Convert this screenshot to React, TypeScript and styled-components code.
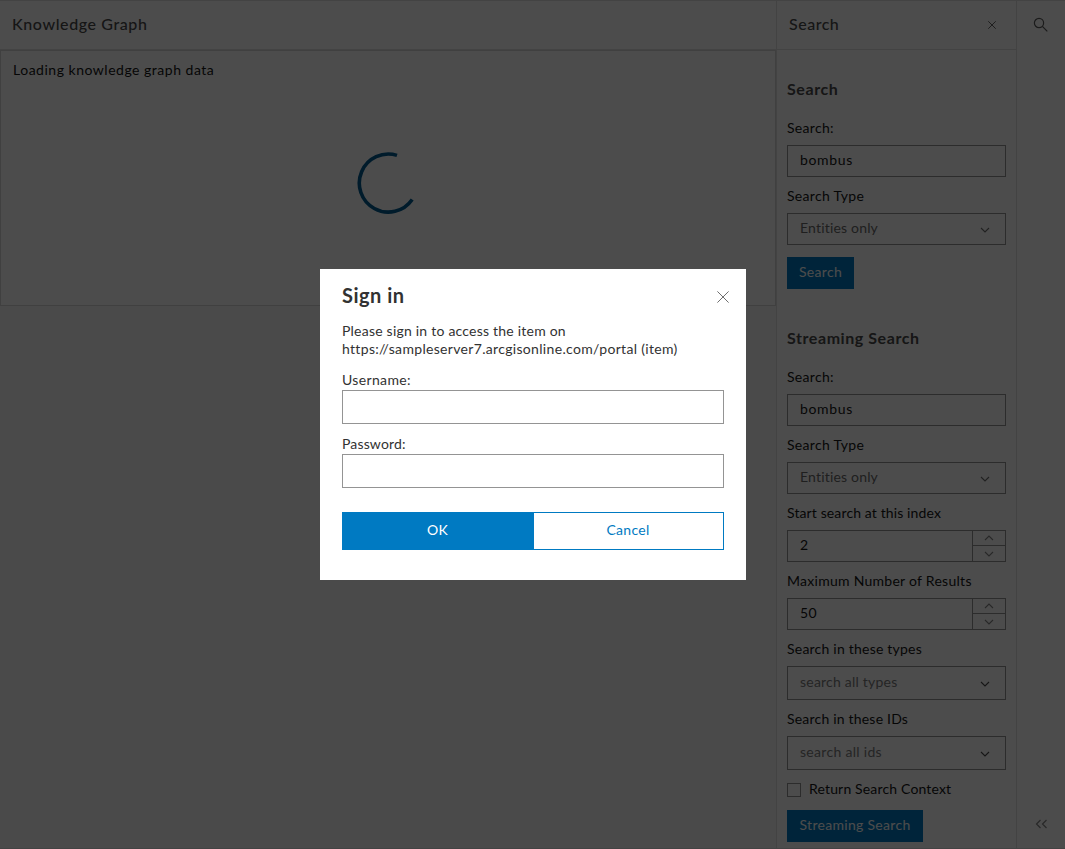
import React from "react";
import styled, { createGlobalStyle, css } from "styled-components";

const GlobalStyle = createGlobalStyle`
  *, *::before, *::after { box-sizing: border-box; }
  html, body { margin: 0; height: 100%; overflow: hidden; }
  body {
    background: #f8f8f8;
    color: #151515;
    font: 400 14px/18px Lato, "Open Sans", sans-serif;
    letter-spacing: 0.3px;
  }
  input, button { font: inherit; letter-spacing: inherit; margin: 0; border-radius: 0; outline: none; }
  svg { display: block; flex: none; }
`;

const Shell = styled.div`
  display: flex;
  width: 100%;
  height: 849px;
  border: solid #dfdfdf;
  border-width: 1px 0;
`;

const Main = styled.main`
  flex: 1;
  display: flex;
  flex-direction: column;
`;

const PanelHeader = styled.header`
  display: flex;
  align-items: center;
  justify-content: space-between;
  height: 49px;
  padding: 0 20px 0 12px;
  background: #fff;
  color: #5a5a5a;
  border-bottom: 1px solid #dfdfdf;
`;

const PanelTitle = styled.h2<{ $track: number }>`
  margin: 0;
  padding-bottom: 2px;
  font-size: 16px;
  line-height: 20px;
  font-weight: 500;
  color: #4a4a4a;
  letter-spacing: ${(p) => p.$track}px;
`;

const GraphCard = styled.section`
  display: flex;
  flex-direction: column;
  height: 256px;
  padding: 10px 12px;
  background: #fff;
  border: 1px solid #d6d6d6;
  letter-spacing: 0.51px;
`;

const LoaderArea = styled.div`
  display: flex;
  justify-content: center;
  margin-top: 72px;
`;

const SearchPanel = styled.aside`
  width: 241px;
  display: flex;
  flex-direction: column;
  background: #fff;
  border: solid #dfdfdf;
  border-width: 0 1px;
`;

const PanelBody = styled.div`
  padding: 0 10px;
`;

const ActionBar = styled.nav`
  width: 48px;
  display: flex;
  flex-direction: column;
  align-items: center;
  justify-content: space-between;
  padding: 16px 0 16px;
  background: #fff;
  color: #5a5a5a;
`;

const SectionTitle = styled.h3<{ $top: number }>`
  margin: ${(p) => p.$top}px 0 10px;
  font-size: 16px;
  line-height: 20px;
  font-weight: 700;
  color: #4a4a4a;
  letter-spacing: 0.57px;
`;

const Label = styled.label<{ $track?: number }>`
  display: block;
  height: 36px;
  padding-top: 10px;
  white-space: nowrap;
  letter-spacing: ${(p) => p.$track ?? 0.3}px;
`;

const frame = css`
  width: 100%;
  border: 1px solid #949494;
  background: #fff;
`;

const TextInput = styled.input<{ $height?: number }>`
  ${frame}
  display: block;
  height: ${(p) => p.$height ?? 32}px;
  padding: 0 12px 3px;
  color: #151515;
  letter-spacing: 0.65px;
`;

const SelectBox = styled.div<{ $height: number; $tone: string; $track?: number }>`
  ${frame}
  display: flex;
  align-items: center;
  justify-content: space-between;
  height: ${(p) => p.$height}px;
  padding: 0 15px 2px 12px;
  color: ${(p) => p.$tone};
  letter-spacing: ${(p) => p.$track ?? 0.18}px;
  svg { margin-top: 4px; }
`;

const NumberBox = styled.div`
  ${frame}
  display: flex;
  height: 32px;
`;

const NumberInput = styled.input`
  flex: 1;
  min-width: 0;
  padding: 0 12px 2px;
  border: 0;
  background: none;
  color: #151515;
`;

const Stepper = styled.div`
  width: 33px;
  display: grid;
  grid-template-rows: 14px 16px;
  border-left: 1px solid #949494;
`;

const Step = styled.button`
  display: flex;
  align-items: center;
  justify-content: center;
  padding: 0;
  border: 0;
  background: none;
  & + & { border-top: 1px solid #949494; }
`;

const PrimaryButton = styled.button<{ $width: number; $top: number }>`
  display: block;
  width: ${(p) => p.$width}px;
  height: 32px;
  margin-top: ${(p) => p.$top}px;
  padding: 0 0 2px;
  border: 0;
  background: #007ac2;
  color: #fff;
  white-space: nowrap;
`;

const CheckRow = styled.label`
  display: flex;
  align-items: center;
  gap: 8px;
  height: 18px;
  margin-top: 11px;
  letter-spacing: 0.16px;
`;

const CheckText = styled.span`
  padding-bottom: 2px;
`;

const CheckBox = styled.span`
  width: 14px;
  height: 14px;
  border: 1px solid #949494;
`;

const Backdrop = styled.div`
  position: fixed;
  inset: 0;
  display: flex;
  justify-content: center;
  align-items: flex-start;
  padding: 269px 0 0 1px;
  background: rgba(0, 0, 0, 0.7);
`;

const Dialog = styled.form`
  width: 426px;
  height: 311px;
  padding: 14px 22px 0;
  background: #fff;
  color: #323232;
`;

const DialogHead = styled.div`
  display: flex;
  justify-content: space-between;
  height: 39px;
`;

const DialogTitle = styled.h1`
  margin: 0;
  font-size: 20px;
  line-height: 24px;
  font-weight: 700;
  letter-spacing: 0.5px;
`;

const CloseButton = styled.button`
  width: 12px;
  height: 12px;
  margin: 8px -5px 0 0;
  padding: 0;
  border: 0;
  background: none;
  color: #6e6e6e;
`;

const Message = styled.p<{ $track: number }>`
  margin: 0;
  white-space: nowrap;
  letter-spacing: ${(p) => p.$track}px;
`;

const Credential = styled.label<{ $top: number; $track: number }>`
  display: block;
  margin-top: ${(p) => p.$top}px;
  letter-spacing: ${(p) => p.$track}px;
  ${TextInput} { margin-top: 1px; }
`;

const DialogActions = styled.div`
  display: flex;
  height: 38px;
  margin-top: 24px;
`;

const DialogButton = styled.button<{ $filled?: boolean }>`
  width: ${(p) => (p.$filled ? 192 : 190)}px;
  padding: 0 1px 2px 0;
  border: 1px solid #007ac2;
  border-left-width: ${(p) => (p.$filled ? 1 : 0)}px;
  background: ${(p) => (p.$filled ? "#007ac2" : "#fff")};
  color: ${(p) => (p.$filled ? "#fff" : "#007ac2")};
`;

const Chevron = ({ up, tone = "#4a4a4a" }: { up?: boolean; tone?: string }) => (
  <svg width="10" height="6" viewBox="0 0 10 6" fill="none" stroke={tone} strokeWidth="1.1">
    <path d={up ? "M1 5 5 1 9 5" : "M1 1 5 5 9 1"} />
  </svg>
);

const Cross = ({ size }: { size: number }) => (
  <svg width={size} height={size} viewBox="0 0 12 12" fill="none" stroke="currentColor" strokeWidth={size > 10 ? 1 : 1.4}>
    <path d="M.4.4l11.2 11.2M11.6.4.4 11.6" />
  </svg>
);

const NumberField = ({ value }: { value: string }) => (
  <NumberBox>
    <NumberInput defaultValue={value} />
    <Stepper>
      <Step type="button" aria-label="Increase"><Chevron up tone="#858585" /></Step>
      <Step type="button" aria-label="Decrease"><Chevron tone="#858585" /></Step>
    </Stepper>
  </NumberBox>
);

export default function App() {
  return (
    <>
      <GlobalStyle />
      <Shell>
        <Main>
          <PanelHeader><PanelTitle $track={0.6}>Knowledge Graph</PanelTitle></PanelHeader>
          <GraphCard>
            Loading knowledge graph data
            <LoaderArea>
              <svg width="64" height="64" viewBox="0 0 64 64" fill="none" stroke="#005a90" strokeWidth="3.6">
                <path d="M41 4.4A29 29 0 1 0 56.2 48.5" />
              </svg>
            </LoaderArea>
          </GraphCard>
        </Main>

        <SearchPanel>
          <PanelHeader>
            <PanelTitle $track={0.5}>Search</PanelTitle>
            <Cross size={8} />
          </PanelHeader>
          <PanelBody>
            <SectionTitle $top={29}>Search</SectionTitle>
            <Label>Search:</Label>
            <TextInput defaultValue="bombus" />
            <Label>Search Type</Label>
            <SelectBox $height={32} $tone="#6a6a6a">Entities only<Chevron tone="#6e6e6e" /></SelectBox>
            <PrimaryButton $width={67} $top={12}>Search</PrimaryButton>

            <SectionTitle $top={39}>Streaming Search</SectionTitle>
            <Label>Search:</Label>
            <TextInput defaultValue="bombus" />
            <Label>Search Type</Label>
            <SelectBox $height={32} $tone="#6a6a6a">Entities only<Chevron tone="#6e6e6e" /></SelectBox>
            <Label $track={0.12}>Start search at this index</Label>
            <NumberField value="2" />
            <Label $track={0.27}>Maximum Number of Results</Label>
            <NumberField value="50" />
            <Label $track={0.22}>Search in these types</Label>
            <SelectBox $height={34} $tone="#7c7c7c" $track={0.22}>search all types<Chevron /></SelectBox>
            <Label $track={0.2}>Search in these IDs</Label>
            <SelectBox $height={34} $tone="#7c7c7c" $track={0.3}>search all ids<Chevron /></SelectBox>
            <CheckRow><CheckBox /><CheckText>Return Search Context</CheckText></CheckRow>
            <PrimaryButton $width={136} $top={11}>Streaming Search</PrimaryButton>
          </PanelBody>
        </SearchPanel>

        <ActionBar>
          <svg width="16" height="16" viewBox="0 0 16 16" fill="none" stroke="currentColor" strokeWidth="1.2">
            <circle cx="6" cy="6" r="4.6" />
            <path d="M9.4 9.4 14.3 14.3" />
          </svg>
          <svg width="14" height="16" viewBox="0 0 14 16" fill="none" stroke="#858585" strokeWidth="1.2">
            <path d="M6.5 4 2.5 8l4 4M12.5 4 8.5 8l4 4" />
          </svg>
        </ActionBar>
      </Shell>

      <Backdrop>
        <Dialog onSubmit={(e) => e.preventDefault()}>
          <DialogHead>
            <DialogTitle>Sign in</DialogTitle>
            <CloseButton type="button" aria-label="Close"><Cross size={12} /></CloseButton>
          </DialogHead>
          <Message $track={0.22}>Please sign in to access the item on</Message>
          <Message $track={0.32}>https://sampleserver7.arcgisonline.com/portal (item)</Message>
          <Credential $top={13} $track={0.35}>Username:<TextInput $height={34} /></Credential>
          <Credential $top={11} $track={0.15}>Password:<TextInput $height={34} type="password" /></Credential>
          <DialogActions>
            <DialogButton $filled type="submit">OK</DialogButton>
            <DialogButton type="button">Cancel</DialogButton>
          </DialogActions>
        </Dialog>
      </Backdrop>
    </>
  );
}
